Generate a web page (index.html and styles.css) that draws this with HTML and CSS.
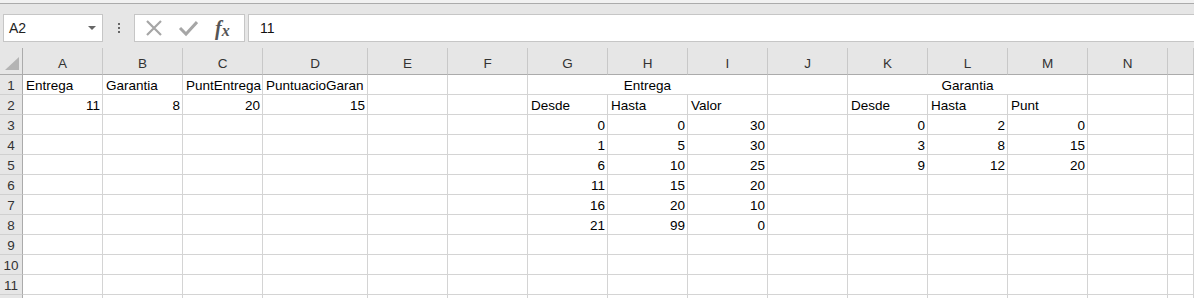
FILE: index.html
```html
<!DOCTYPE html>
<html>
  <head>
    <title>Hoja1</title>
    <meta charset="UTF-8" />
    <link rel="stylesheet" href="styles.css">
  </head>
  <body>
    <div class="ribbon-edge"></div>

    <div class="toolbar">
      <div class="formula-row">
        <div class="name-box">
          <span>A2</span>
          <span class="name-arrow"></span>
        </div>
        <div class="grip"><i></i><i></i><i></i></div>
        <div class="fx-buttons">
          <svg class="btn-icon" width="18" height="18" viewBox="0 0 18 18">
            <path d="M2 2 L16 16 M16 2 L2 16" stroke="#a6a6a6" stroke-width="2.2" fill="none" />
          </svg>
          <svg class="btn-icon" width="20" height="18" viewBox="0 0 20 18">
            <path d="M2 9 L8 15 L19 3" stroke="#a6a6a6" stroke-width="3" fill="none" />
          </svg>
          <span class="fx-label">f<sub>x</sub></span>
        </div>
        <div class="formula-input">11</div>
      </div>
    </div>

    <div class="sheet" id="sheet"></div>

    <script>
      const cols = ['A', 'B', 'C', 'D', 'E', 'F', 'G', 'H', 'I', 'J', 'K', 'L', 'M', 'N', '']
      const rowCount = 11

      // cell values, keyed by address
      const values = {
        A1: 'Entrega', B1: 'Garantia', C1: 'PuntEntrega', D1: 'PuntuacioGaran',
        A2: 11, B2: 8, C2: 20, D2: 15,
        G2: 'Desde', H2: 'Hasta', I2: 'Valor',
        K2: 'Desde', L2: 'Hasta', M2: 'Punt'
      }
      const entrega = [[0, 0, 30], [1, 5, 30], [6, 10, 25], [11, 15, 20], [16, 20, 10], [21, 99, 0]]
      const garantia = [[0, 2, 0], [3, 8, 15], [9, 12, 20]]
      entrega.forEach((r, i) => {
        values['G' + (i + 3)] = r[0]
        values['H' + (i + 3)] = r[1]
        values['I' + (i + 3)] = r[2]
      })
      garantia.forEach((r, i) => {
        values['K' + (i + 3)] = r[0]
        values['L' + (i + 3)] = r[1]
        values['M' + (i + 3)] = r[2]
      })

      // merged titles: start cell -> [text, span]
      const merged = { G1: ['Entrega', 3], K1: ['Garantia', 3] }
      const skip = ['H1', 'I1', 'L1', 'M1']

      const sheet = document.getElementById('sheet')

      function add(cls, text) {
        const el = document.createElement('div')
        el.className = cls
        if (text !== undefined) el.textContent = text
        sheet.appendChild(el)
        return el
      }

      add('corner').innerHTML = '<span class="corner-mark"></span>'
      cols.forEach(c => add('col-head', c))

      for (let r = 1; r <= rowCount; r++) {
        add('row-head', r)
        cols.forEach(c => {
          const key = c + r
          if (skip.includes(key)) return
          if (merged[key]) {
            const el = add('cell merged', merged[key][0])
            el.style.gridColumn = 'span ' + merged[key][1]
            return
          }
          const v = values[key]
          if (v === undefined) add('cell')
          else add(typeof v === 'number' ? 'cell num' : 'cell', v)
        })
      }
      // next row peeks in at the bottom edge, no label visible
      add('row-head')
      cols.forEach(() => add('cell'))
    </script>
  </body>
</html>
```

FILE: styles.css
```css
html,
body {
  margin: 0;
  height: 100%;
  overflow: hidden;
}
body {
  font-family: "Liberation Sans", Arial, sans-serif;
  background: #fff;
}

.ribbon-edge {
  height: 3px;
  background: #f1f1f1;
  border-bottom: 1px solid #ababab;
}

.toolbar {
  height: 44px;
  background: #e6e6e6;
}
.formula-row {
  display: flex;
  align-items: stretch;
  padding-top: 10px;
  height: 28px;
}

.name-box {
  margin-left: 3px;
  width: 100px;
  box-sizing: border-box;
  border: 1px solid #c6c6c6;
  background: #fff;
  display: flex;
  align-items: center;
  justify-content: space-between;
  padding: 0 5px 0 5px;
  font-size: 14px;
  color: #222;
}
.name-arrow {
  width: 0;
  height: 0;
  border-left: 4px solid transparent;
  border-right: 4px solid transparent;
  border-top: 4px solid #666;
  margin-right: 1px;
}

.grip {
  width: 31px;
  display: flex;
  flex-direction: column;
  align-items: center;
  justify-content: center;
  gap: 2px;
}
.grip i {
  width: 2px;
  height: 2px;
  background: #666;
}

.fx-buttons {
  width: 111px;
  box-sizing: border-box;
  border: 1px solid #c6c6c6;
  background: #fff;
  display: flex;
  align-items: center;
  padding-left: 10px;
  gap: 15px;
}
.fx-label {
  font-family: "Liberation Serif", "Times New Roman", serif;
  font-style: italic;
  font-weight: bold;
  font-size: 20px;
  color: #555;
  margin-left: 2px;
}
.fx-label sub {
  font-size: 16px;
  vertical-align: -1px;
}

.formula-input {
  flex: 1;
  margin-left: 3px;
  box-sizing: border-box;
  border: 1px solid #c6c6c6;
  border-right: 0;
  background: #fff;
  display: flex;
  align-items: center;
  padding-left: 11px;
  font-size: 14px;
  color: #111;
}

.sheet {
  display: grid;
  grid-template-columns: 23px 80px 80px 80px 105px repeat(10, 80px) 1fr;
  grid-template-rows: 27px repeat(12, 20px);
}

.corner,
.col-head,
.row-head {
  background: #e6e6e6;
  box-sizing: border-box;
  color: #333;
  font-size: 13.5px;
}
.corner {
  border-right: 1px solid #ababab;
  border-bottom: 1px solid #ababab;
  position: relative;
}
.corner-mark {
  position: absolute;
  right: 3px;
  bottom: 4px;
  width: 0;
  height: 0;
  border-left: 14px solid transparent;
  border-bottom: 13px solid #b4b4b4;
}
.col-head {
  border-right: 1px solid #c8c8c8;
  border-bottom: 1px solid #ababab;
  text-align: center;
  line-height: 20px;
  padding-top: 6px;
}
.row-head {
  border-right: 1px solid #ababab;
  border-bottom: 1px solid #d0d0d0;
  text-align: center;
  line-height: 22px;
  overflow: hidden;
}

.cell {
  box-sizing: border-box;
  border-right: 1px solid #d4d4d4;
  border-bottom: 1px solid #d4d4d4;
  font-size: 13.5px;
  line-height: 22px;
  padding: 0 3px;
  color: #000;
  white-space: nowrap;
  overflow: hidden;
}
.num {
  text-align: right;
  padding-right: 2px;
}
.merged {
  text-align: center;
}
```
